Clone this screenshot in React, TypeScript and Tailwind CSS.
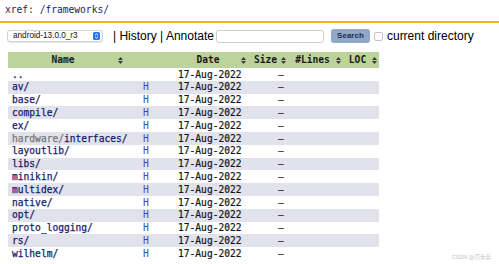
const rows: { name: string; prefix?: string; h: boolean }[] = [
  { name: '..', h: false },
  { name: 'av/', h: true },
  { name: 'base/', h: true },
  { name: 'compile/', h: true },
  { name: 'ex/', h: true },
  { name: 'interfaces/', prefix: 'hardware/', h: true },
  { name: 'layoutlib/', h: true },
  { name: 'libs/', h: true },
  { name: 'minikin/', h: true },
  { name: 'multidex/', h: true },
  { name: 'native/', h: true },
  { name: 'opt/', h: true },
  { name: 'proto_logging/', h: true },
  { name: 'rs/', h: true },
  { name: 'wilhelm/', h: true },
];

function SortArrow() {
  return (
    <svg width="5" height="7" viewBox="0 0 5 7" className="shrink-0">
      <path d="M2.5 0 L5 3 L0 3 Z" fill="#3a3a3a" />
      <path d="M2.5 7 L5 4 L0 4 Z" fill="#3a3a3a" />
    </svg>
  );
}

function HeaderCell({ label, width, mr }: { label: string; width: string; mr: string }) {
  return (
    <div className={`flex items-center ${width}`}>
      <span className="flex-1 text-center">{label}</span>
      <span className={mr}>
        <SortArrow />
      </span>
    </div>
  );
}

export default function App() {
  const mono = { fontFamily: '"DejaVu Sans Mono", monospace' };
  const sans = { fontFamily: '"Liberation Sans", Arial, sans-serif' };

  return (
    <div className="relative w-[499px] h-[264px] overflow-hidden bg-white text-[#222]">
      <div className="h-[21px] pl-[5px] pt-[3px] text-[9.6px] leading-[14px] text-[#18245e]" style={mono}>
        xref: /frameworks/
      </div>
      <div className="h-[2px] bg-[#f1b60b]" />

      {/* toolbar */}
      <div className="flex items-center h-[14px] mt-[6px]" style={sans}>
        <div className="ml-[7px] w-[96px] h-[12px] flex items-center justify-between border border-[#d4d4d4] rounded-[3px] bg-white shadow-[0_0.5px_1px_rgba(0,0,0,0.1)]">
          <span className="ml-[5px] text-[8.2px] leading-none text-[#111]">android-13.0.0_r3</span>
          <svg width="7" height="8" viewBox="0 0 7 8" className="mr-[2px]">
            <rect width="7" height="8" rx="1.6" fill="#2f74e6" />
            <path d="M2 3.2 L3.5 1.8 L5 3.2" stroke="white" strokeWidth="0.9" fill="none" />
            <path d="M2 4.8 L3.5 6.2 L5 4.8" stroke="white" strokeWidth="0.9" fill="none" />
          </svg>
        </div>
        <span className="ml-[10px] text-[12px] leading-none text-black whitespace-pre">| History | Annotate</span>
        <div className="ml-[2px] w-[108px] h-[13px] border border-[#cfcfcf] rounded-[3px] bg-white" />
        <div className="ml-[7px] w-[39px] h-[14px] flex items-center justify-center rounded-[3px] bg-[#91a7c8] text-[8px] font-bold text-[#1f2d4f]">
          Search
        </div>
        <div className="ml-[4px] w-[9px] h-[9px] border border-[#c4c4c4] rounded-[2px] bg-white" />
        <span className="ml-[4px] text-[12px] leading-none text-black">current directory</span>
      </div>

      {/* table */}
      <div className="ml-[8px] mt-[9px] w-[371px] text-[9.6px]" style={mono}>
        <div className="flex h-[16px] bg-[#bcd39c] font-bold text-[#1b1b1b]">
          <HeaderCell label="Name" width="w-[122px]" mr="mr-[7px]" />
          <div className="w-[40px]" />
          <div className="flex items-center w-[80px]">
            <span className="flex-1 text-center pl-[5px]">Date</span>
            <span className="mr-[4px]">
              <SortArrow />
            </span>
          </div>
          <HeaderCell label="Size" width="w-[39px]" mr="mr-[3px]" />
          <HeaderCell label="#Lines" width="w-[54px]" mr="mr-[2px]" />
          <HeaderCell label="LOC" width="w-[36px]" mr="mr-[2px]" />
        </div>
        {rows.map((r, i) => (
          <div
            key={r.name}
            className={`flex items-center h-[12.8px] leading-none ${i % 2 === 1 ? 'bg-[#e1e2ec]' : 'bg-white'}`}
          >
            <div className="w-[122px] pl-[4px] text-[#151d6c] [-webkit-text-stroke:0.25px_#151d6c]">
              {r.prefix && <span className="text-[#777] [-webkit-text-stroke:0.25px_#777]">{r.prefix}</span>}
              {r.name}
            </div>
            <div className="w-[40px] pl-[13px] text-[#3a4bb0]">{r.h ? 'H' : ''}</div>
            <div className="w-[80px] pl-[8px] text-[#151515] [-webkit-text-stroke:0.2px_#151515]">17-Aug-2022</div>
            <div className="w-[39px] pl-[28px] text-[#151515]">–</div>
            <div className="w-[54px]" />
            <div className="w-[36px]" />
          </div>
        ))}
      </div>

      <div
        className="absolute right-[8px] bottom-[4px] text-[5.5px] leading-none text-[#c4c4c4]"
        style={{ fontFamily: '"Liberation Sans", "Noto Sans CJK SC", sans-serif' }}
      >
        CSDN @百步奔
      </div>
    </div>
  );
}
